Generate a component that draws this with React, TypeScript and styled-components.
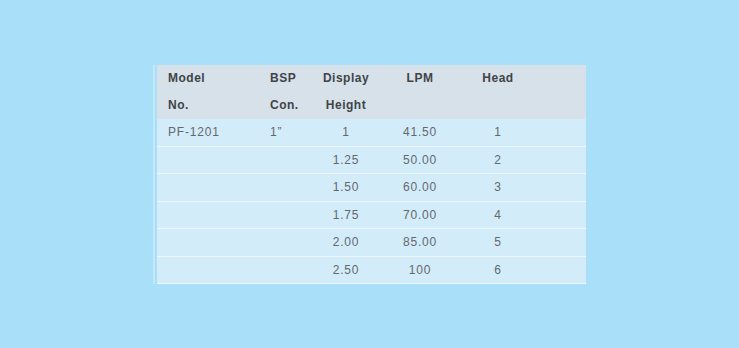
import React from "react";
import styled, { createGlobalStyle } from "styled-components";

const Global = createGlobalStyle`
  html, body { margin: 0; padding: 0; }
  body {
    background: #aadff9;
    font-family: "Liberation Sans", Arial, Helvetica, sans-serif;
  }
`;

const Page = styled.div`
  width: 739px;
  height: 348px;
  display: flex;
  align-items: center;
  justify-content: center;
`;

const Frame = styled.div`
  border-left: 2px solid #c3e8fb;
  padding-left: 2px;
  margin-top: 1px;
`;

const Table = styled.div`
  width: 429px;
  display: grid;
  grid-template-columns: 105px 50px 68px 80px 76px 50px;
`;

const Row = styled.div`
  display: contents;
`;

const HeadCell = styled.div<{ $align?: "left" | "center"; $pad?: number }>`
  background: #d7e1e9;
  color: #404448;
  font-weight: 700;
  font-size: 12px;
  letter-spacing: 0.5px;
  line-height: 27px;
  text-align: ${(p) => p.$align ?? "center"};
  padding-left: ${(p) => p.$pad ?? 0}px;
  white-space: nowrap;
`;

const Cell = styled.div<{ $align?: "left" | "center"; $pad?: number }>`
  background: #d3ecfa;
  color: #64686c;
  font-size: 12px;
  letter-spacing: 0.8px;
  height: 27.5px;
  line-height: 26px;
  box-sizing: border-box;
  border-bottom: 1.5px solid #ecf8fe;
  text-align: ${(p) => p.$align ?? "center"};
  padding-left: ${(p) => p.$pad ?? 0}px;
  white-space: nowrap;
`;

type Entry = { model: string; bsp: string; height: string; lpm: string; head: string };

const entries: Entry[] = [
  { model: "PF-1201", bsp: "1\u201d", height: "1", lpm: "41.50", head: "1" },
  { model: "", bsp: "", height: "1.25", lpm: "50.00", head: "2" },
  { model: "", bsp: "", height: "1.50", lpm: "60.00", head: "3" },
  { model: "", bsp: "", height: "1.75", lpm: "70.00", head: "4" },
  { model: "", bsp: "", height: "2.00", lpm: "85.00", head: "5" },
  { model: "", bsp: "", height: "2.50", lpm: "100", head: "6" },
];

export default function App() {
  return (
    <>
      <Global />
      <Page>
        <Frame>
          <Table>
            <Row>
              <HeadCell $align="left" $pad={11}>Model<br />No.</HeadCell>
              <HeadCell $align="left" $pad={8}>BSP<br />Con.</HeadCell>
              <HeadCell>Display<br />Height</HeadCell>
              <HeadCell>LPM</HeadCell>
              <HeadCell>Head</HeadCell>
              <HeadCell />
            </Row>
            {entries.map((r, i) => (
              <Row key={i}>
                <Cell $align="left" $pad={11}>{r.model}</Cell>
                <Cell $align="left" $pad={8}>{r.bsp}</Cell>
                <Cell>{r.height}</Cell>
                <Cell>{r.lpm}</Cell>
                <Cell>{r.head}</Cell>
                <Cell />
              </Row>
            ))}
          </Table>
        </Frame>
      </Page>
    </>
  );
}
